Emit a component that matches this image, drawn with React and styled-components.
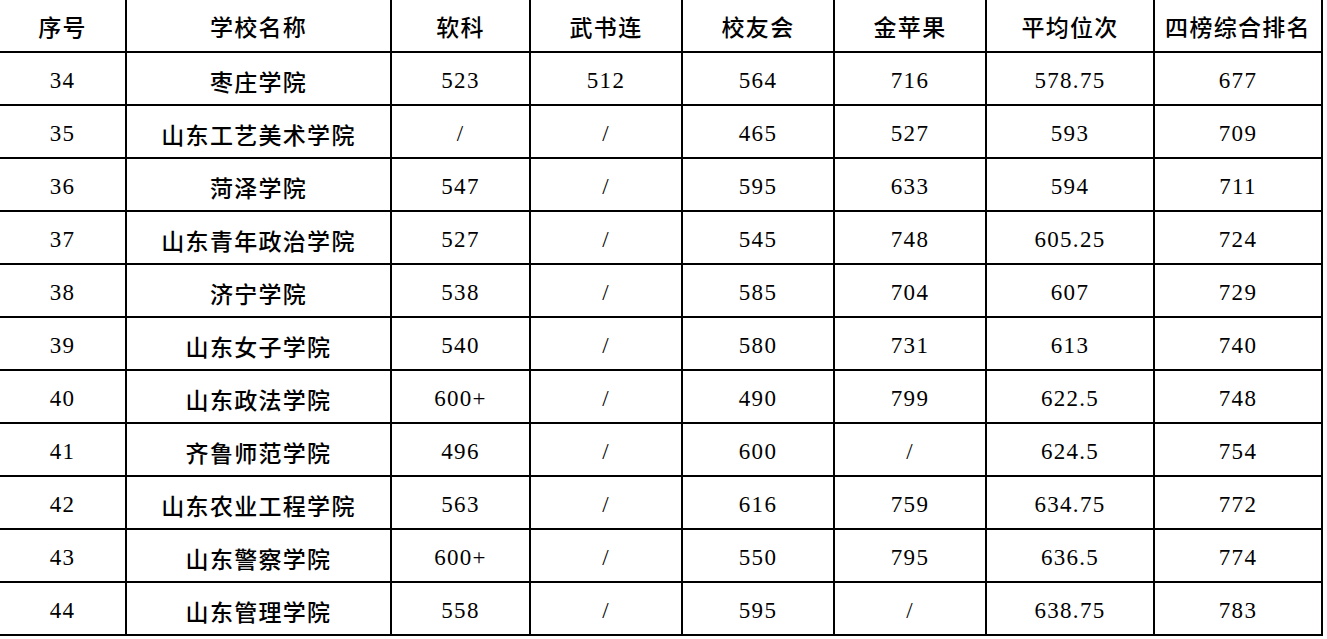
import React from "react";
import styled, { createGlobalStyle } from "styled-components";

const Global = createGlobalStyle`
  html, body { margin: 0; padding: 0; background: #fff; }
  #root { width: 1327px; height: 639px; overflow: hidden; }
`;

const Table = styled.div`
  display: grid;
  grid-template-columns: 127px 265px 139px 152px 152px 152px 168px 168px;
  grid-auto-rows: 53px;
  width: 1323px;
  font-family: "Liberation Serif", "Noto Sans CJK SC", serif;
  font-size: 23px;
  font-weight: 500;
  letter-spacing: 1.3px;
  color: #000;
`;

const Cell = styled.div`
  display: flex;
  align-items: center;
  justify-content: center;
  box-sizing: border-box;
  border-right: 2px solid #000;
  border-bottom: 2px solid #000;
  padding-top: ${(p) => (p.$head ? "0" : "4px")};
  white-space: nowrap;
`;

const headers = ["序号", "学校名称", "软科", "武书连", "校友会", "金苹果", "平均位次", "四榜综合排名"];

const rows = [
  ["34", "枣庄学院", "523", "512", "564", "716", "578.75", "677"],
  ["35", "山东工艺美术学院", "/", "/", "465", "527", "593", "709"],
  ["36", "菏泽学院", "547", "/", "595", "633", "594", "711"],
  ["37", "山东青年政治学院", "527", "/", "545", "748", "605.25", "724"],
  ["38", "济宁学院", "538", "/", "585", "704", "607", "729"],
  ["39", "山东女子学院", "540", "/", "580", "731", "613", "740"],
  ["40", "山东政法学院", "600+", "/", "490", "799", "622.5", "748"],
  ["41", "齐鲁师范学院", "496", "/", "600", "/", "624.5", "754"],
  ["42", "山东农业工程学院", "563", "/", "616", "759", "634.75", "772"],
  ["43", "山东警察学院", "600+", "/", "550", "795", "636.5", "774"],
  ["44", "山东管理学院", "558", "/", "595", "/", "638.75", "783"],
];

export default function App() {
  return (
    <>
      <Global />
      <Table>
        {headers.map((h) => (
          <Cell key={h} $head>
            {h}
          </Cell>
        ))}
        {rows.map((r) =>
          r.map((v, i) => <Cell key={r[0] + "-" + i}>{v}</Cell>)
        )}
      </Table>
    </>
  );
}
